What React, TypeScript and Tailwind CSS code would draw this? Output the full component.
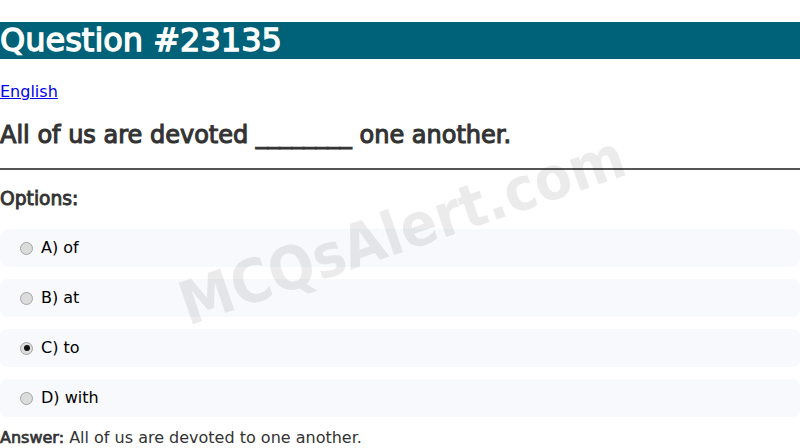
const options = [
  { label: "A) of", checked: false },
  { label: "B) at", checked: false },
  { label: "C) to", checked: true },
  { label: "D) with", checked: false },
];

export default function App() {
  return (
    <div className="relative w-[800px] h-[448px] overflow-hidden bg-white font-['DejaVu_Sans',sans-serif] text-[#333]">
      <h1 className="mt-[22px] bg-[#006278] text-white text-[32px] leading-[37px] [-webkit-text-stroke:1.3px_currentColor]">
        Question #23135
      </h1>

      <div className="mt-[23px] text-[16px] leading-[19px]">
        <a href="#" className="text-[#0000ee] underline">English</a>
      </div>

      <h2 className="mt-[20px] text-[24px] leading-[28px] [-webkit-text-stroke:1.1px_currentColor]">
        All of us are devoted ________ one another.
      </h2>

      <hr className="mt-[19px] border-t-2 border-[#555]" />

      <h3 className="mt-[18px] text-[18.7px] leading-[22px] [-webkit-text-stroke:0.9px_currentColor]">Options:</h3>

      <div className="mt-[19px] flex flex-col gap-[12px]">
        {options.map((o) => (
          <div
            key={o.label}
            className="flex h-[38px] items-center gap-[8px] rounded-lg bg-[#f8f9fc] pl-[20px] text-[16px] text-black"
          >
            <span className="flex h-[13px] w-[13px] items-center justify-center rounded-full border border-[#a5a5a5] bg-[#dcdcdc]">
              {o.checked && <span className="h-[6px] w-[6px] rounded-full bg-[#111]" />}
            </span>
            <span>{o.label}</span>
          </div>
        ))}
      </div>

      <p className="mt-[11px] text-[16px] leading-[19px]">
        <span className="[-webkit-text-stroke:0.7px_currentColor]">Answer:</span> All of us are devoted to one another.
      </p>

      <div className="pointer-events-none absolute left-[402px] top-[230px] -translate-x-1/2 -translate-y-1/2 -rotate-[19deg] whitespace-nowrap font-['DejaVu_Sans_Condensed',sans-serif] text-[60px] font-bold text-black/[0.08]">
        MCQsAlert.com
      </div>
    </div>
  );
}
